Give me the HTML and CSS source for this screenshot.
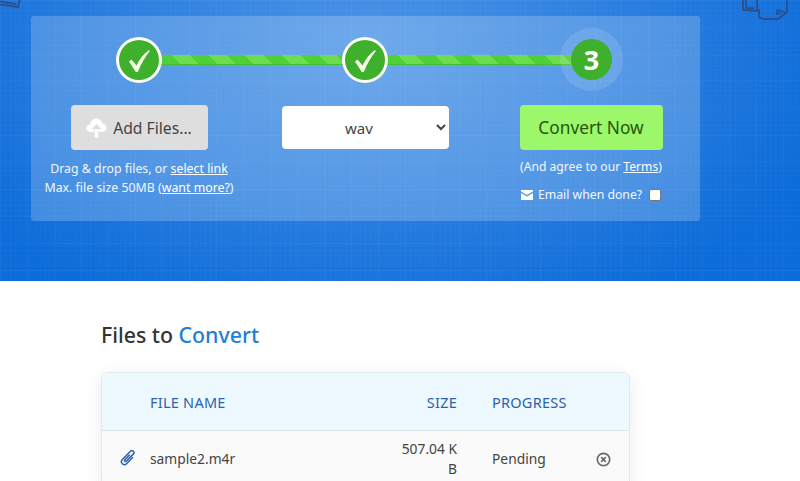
FILE: index.html
```html
<!DOCTYPE html>
<html lang="en">
<head>
    <meta charset="UTF-8">
    <meta name="viewport" content="width=device-width, initial-scale=1.0">
    <title>Files to Convert</title>
    <link rel="stylesheet" href="styles.css">
</head>
<body>
    <section class="hero">
        <svg class="doodle doodle-left" width="24" height="10" viewBox="0 0 24 10"><path d="M-2 4 L18 7 L20 -1 M-2 1 L16 4"/></svg>
        <svg class="doodle doodle-right" width="50" height="22" viewBox="0 0 50 22"><path d="M2 -2 V10 L16 11 V-2 M5 -2 V8 L13 8.500 M16 10 H18 V17 L22 19 H37 L46 12 V-2 M36 10 L44 12 M36 10 V14 L40 13"/></svg>

        <div class="panel">
            <div class="steps">
                <div class="step step-done">
                    <svg width="46" height="46" viewBox="0 0 46 46"><path class="tick" d="M13 24.500 L15.500 22.500 L20.500 28.500 C23.500 22 27.500 17 33 13 L33.800 14 C29 20 25 27 21.800 35 L19.800 35 Z"/></svg>
                </div>
                <div class="step-line step-line-first"></div>
                <div class="step step-done">
                    <svg width="46" height="46" viewBox="0 0 46 46"><path class="tick" d="M13 24.500 L15.500 22.500 L20.500 28.500 C23.500 22 27.500 17 33 13 L33.800 14 C29 20 25 27 21.800 35 L19.800 35 Z"/></svg>
                </div>
                <div class="step-line"></div>
                <div class="step step-current">3</div>
            </div>

            <div class="controls">
                <div class="col">
                    <button class="btn btn-add">
                        <svg width="21" height="20" viewBox="0 0 21 20"><path class="cloud" d="M5 14 C1.500 14 0 11.500 0.500 9.500 C1 7.500 2.500 6.500 4 6.800 C4.500 3 7.500 0.500 10.500 0.500 C13.500 0.500 15.800 2.500 16.300 5.500 C19 5.500 20.500 7.800 20.500 10 C20.500 12.500 18.500 14 16 14 L13 14 L13 11 L15.500 11 L10.500 6 L5.500 11 L8 11 L8 14 Z M8.700 11 H12.300 V19.500 H8.700 Z"/></svg>
                        Add Files...
                    </button>
                    <p class="hint hint-add">Drag &amp; drop files, or <a href="#">select link</a><br>Max. file size 50MB (<a href="#">want more?</a>)</p>
                </div>
                <div class="col">
                    <select class="format">
                        <option>wav</option>
                    </select>
                </div>
                <div class="col">
                    <button class="btn btn-convert">Convert Now</button>
                    <p class="hint hint-terms">(And agree to our <a href="#">Terms</a>)</p>
                    <label class="hint email">
                        <svg width="12" height="10" viewBox="0 0 12 10"><path class="mail" d="M0 0 H12 V1.500 L6 5 L0 1.500 Z M0 3 L6 6.500 L12 3 V10 H0 Z"/></svg>
                        Email when done?
                        <span class="checkbox"></span>
                    </label>
                </div>
            </div>
        </div>
    </section>

    <section class="files">
        <h2>Files to <span>Convert</span></h2>
        <div class="files-card">
            <table>
                <thead>
                    <tr>
                        <th class="col-icon"></th>
                        <th class="col-name">File Name</th>
                        <th class="col-size">Size</th>
                        <th class="col-progress">Progress</th>
                        <th class="col-remove"></th>
                    </tr>
                </thead>
                <tbody>
                    <tr>
                        <td class="col-icon">
                            <svg class="clip" width="18" height="18" viewBox="0 0 18 16"><path transform="rotate(45 9 8)" d="M12 4 V13 a3 3 0 0 1 -6 0 V1.500 a2 2 0 0 1 4 0 V11.500 a1 1 0 0 1 -2 0 V4.500"/></svg>
                        </td>
                        <td class="col-name">sample2.m4r</td>
                        <td class="col-size">507.04 KB</td>
                        <td class="col-progress">Pending</td>
                        <td class="col-remove">
                            <svg class="remove" width="15" height="15" viewBox="0 0 15 15"><circle cx="7.500" cy="7.500" r="6.200"/><path d="M5.200 5.200 L9.800 9.800 M9.800 5.200 L5.200 9.800"/></svg>
                        </td>
                    </tr>
                </tbody>
            </table>
        </div>
    </section>
</body>
</html>
```

FILE: styles.css
```css
html, body {
    margin: 0;
    height: 481px;
    overflow: hidden;
}
body {
    font-family: "Noto Sans", "Open Sans", Arial, sans-serif;
    background: #fff;
    color: #333;
}

/* blue header */
.hero {
    position: relative;
    height: 265px;
    padding-top: 16px;
    background-color: #0c6cd9;
    background-image:
        linear-gradient(rgba(255,255,255,0.035) 1px, transparent 1px),
        linear-gradient(90deg, rgba(255,255,255,0.035) 1px, transparent 1px),
        linear-gradient(rgba(255,255,255,0.015) 1px, transparent 1px),
        linear-gradient(90deg, rgba(255,255,255,0.015) 1px, transparent 1px),
        radial-gradient(ellipse 480px 300px at 370px 40px, #4a93e6 0%, #2a7edf 55%, #0c6cd9 100%);
    background-size: 27px 27px, 27px 27px, 5px 5px, 5px 5px, 100% 100%;
}
.doodle {
    position: absolute;
    top: 0;
    fill: none;
    stroke: #2a4f8c;
    stroke-width: 1.800;
}
.doodle-left { left: 0; }
.doodle-right { left: 741px; }

.panel {
    width: 669px;
    height: 205px;
    margin-left: 31px;
    background: rgba(255,255,255,0.2);
    border-radius: 3px;
}

/* steps */
.steps {
    display: flex;
    align-items: center;
    height: 47px;
    width: 496px;
    margin-left: 85px;
    padding-top: 20px;
}
.step {
    flex: none;
    position: relative;
    z-index: 1;
    box-sizing: border-box;
    border-radius: 50%;
    background: #3fb02c;
}
.step-done {
    width: 46px;
    height: 46px;
    box-shadow: inset 0 0 0 3px #fff;
}
.step-done svg {
    display: block;
}
.tick {
    fill: #f6fbe6;
}
.step-current {
    width: 41px;
    height: 41px;
    box-shadow: 0 0 0 11px rgba(255,255,255,0.12);
    color: #fff;
    font-size: 27px;
    font-weight: 700;
    line-height: 41px;
    text-align: center;
}
.step-line {
    flex: 1;
    height: 10px;
    box-sizing: border-box;
    border-bottom: 1px solid #42bf2d;
    background: repeating-linear-gradient(45deg, #4ed036 0, #4ed036 13px, #6cdc50 13px, #6cdc50 26px);
}
.step-line-first {
    flex: none;
    width: 180px;
}

/* controls */
.controls {
    display: grid;
    grid-template-columns: repeat(3, 226px);
    margin: 22px 0 0 -5px;
}
.col {
    display: flex;
    flex-direction: column;
    align-items: center;
}
.btn {
    display: flex;
    align-items: center;
    justify-content: center;
    height: 45px;
    border: 0;
    border-radius: 4px;
    font-family: inherit;
}
.btn-add {
    gap: 6px;
    width: 137px;
    background: #dedede;
    color: #444;
    font-size: 15.700px;
}
.cloud {
    fill: #fff;
}
.btn-convert {
    width: 143px;
    background: #9cf76a;
    color: #24560f;
    font-size: 17.300px;
}
.format {
    width: 167px;
    height: 43px;
    margin-top: 1px;
    border: 0;
    border-radius: 4px;
    background: #fff;
    color: #444;
    font-family: inherit;
    font-size: 15px;
    text-align: center;
    text-align-last: center;
}
.hint {
    margin: 0;
    color: #f2f8ff;
    font-size: 12.350px;
    line-height: 19px;
    text-align: center;
    white-space: nowrap;
}
.hint a {
    color: #fff;
}
.hint-add {
    margin-top: 9px;
}
.hint-terms {
    margin-top: 7px;
    font-size: 12.150px;
}
.email {
    display: flex;
    align-items: center;
    gap: 5px;
    margin-top: 9px;
    font-size: 12.250px;
}
.mail {
    fill: #fff;
}
.checkbox {
    width: 10px;
    height: 10px;
    margin-left: 2px;
    border: 1px solid #777;
    border-radius: 2px;
    background: #fff;
}

/* file list */
.files {
    width: 529px;
    margin-left: 101px;
}
.files h2 {
    margin: 38px 0 21px;
    color: #333;
    font-size: 21.300px;
    font-weight: 500;
    line-height: 32px;
}
.files h2 span {
    color: #1c7ed6;
}
.files-card {
    border: 1px solid #e3e8ea;
    border-radius: 6px;
    overflow: hidden;
    box-shadow: 0 4px 18px rgba(0,0,0,0.08);
}
table {
    width: 100%;
    border-collapse: collapse;
    table-layout: fixed;
}
th {
    height: 57px;
    padding: 0;
    background: #eef9ff;
    border-bottom: 1px solid #dde3e6;
    color: #2c62ad;
    font-size: 14.500px;
    font-weight: 400;
    letter-spacing: 0.25px;
    text-align: left;
    text-transform: uppercase;
}
td {
    padding: 8px 0;
    background: #fafafa;
    color: #444;
    font-size: 13.800px;
    line-height: 20px;
}
.col-icon {
    width: 48px;
    text-align: center;
}
.col-name {
    width: 231px;
}
th.col-size, td.col-size {
    width: 60px;
    padding-left: 16px;
    text-align: right;
    word-break: break-all;
}
.col-progress {
    width: 104px;
    padding-left: 35px;
}
.col-remove {
    text-align: left;
}
.clip {
    display: block;
    margin: 0 0 3px 17px;
    fill: none;
    stroke: #2c62ad;
    stroke-width: 1.500;
}
.remove {
    display: block;
    fill: none;
    stroke: #6b6b6b;
    stroke-width: 1.700;
}
```
